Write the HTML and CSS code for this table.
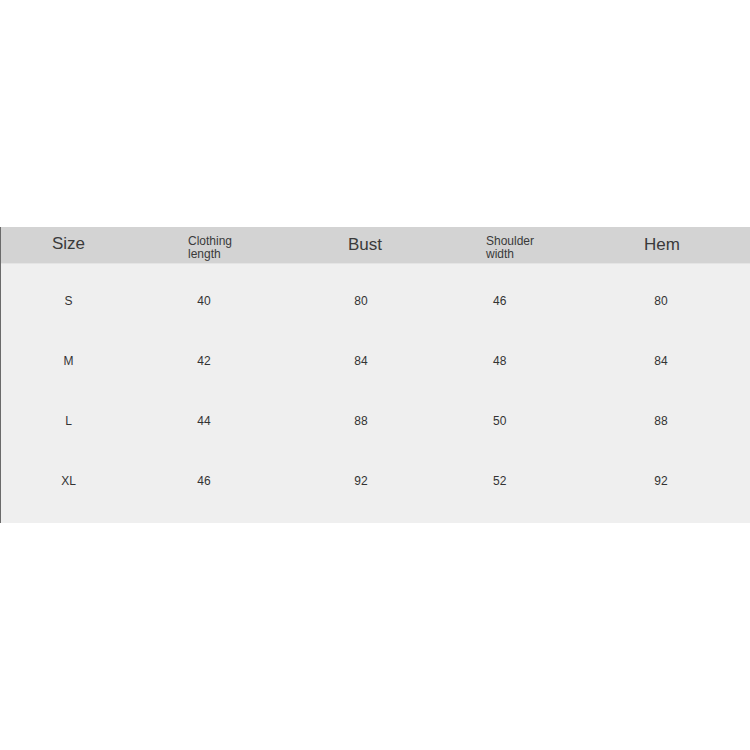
FILE: index.html
```html
<!DOCTYPE html>
<html>
<head>
<meta charset="utf-8">
<link rel="stylesheet" href="styles.css">
</head>
<body>
<div class="page">
  <div class="chart">
    <div class="head">
      <div class="c c1 big">Size</div>
      <div class="c c2 small">Clothing<br>length</div>
      <div class="c c3 big">Bust</div>
      <div class="c c4 small">Shoulder<br>width</div>
      <div class="c c5 big">Hem</div>
    </div>
    <div class="body">
      <div class="row">
        <div class="c c1">S</div><div class="c c2">40</div><div class="c c3">80</div><div class="c c4">46</div><div class="c c5">80</div>
      </div>
      <div class="row">
        <div class="c c1">M</div><div class="c c2">42</div><div class="c c3">84</div><div class="c c4">48</div><div class="c c5">84</div>
      </div>
      <div class="row">
        <div class="c c1">L</div><div class="c c2">44</div><div class="c c3">88</div><div class="c c4">50</div><div class="c c5">88</div>
      </div>
      <div class="row">
        <div class="c c1">XL</div><div class="c c2">46</div><div class="c c3">92</div><div class="c c4">52</div><div class="c c5">92</div>
      </div>
    </div>
  </div>
</div>
</body>
</html>
```
FILE: styles.css
```css
html, body {
  margin: 0;
  padding: 0;
  background: #ffffff;
}
.page {
  width: 750px;
  height: 750px;
  padding-top: 227px;
  box-sizing: border-box;
  font-family: "Liberation Sans", Arial, sans-serif;
}
.chart {
  border-left: 1px solid #6a6a6a;
  box-sizing: border-box;
  width: 750px;
}
.head, .row {
  display: grid;
  grid-template-columns: 135px 136px 180px 122px 1fr;
  align-items: center;
}
.head {
  background: #d3d3d3;
  height: 36px;
  border-bottom: 1px solid #e4e4e4;
  color: #3a3a3a;
}
.body {
  background: #efefef;
  padding: 7px 0 12px;
}
.row {
  height: 60px;
  font-size: 12px;
  color: #333333;
}
.c {
  text-align: center;
}
.big {
  font-size: 17px;
}
.small {
  font-size: 12px;
  line-height: 13px;
  text-align: left;
  padding-top: 6px;
}
.head .c1 { padding-bottom: 2px; }
.head .c2 { padding-left: 52px; }
.head .c3 { padding-left: 6px; }
.head .c4 { padding-left: 34px; }
.head .c5 { padding-right: 0; }
.row .c4 { text-align: left; padding-left: 41px; }
.row .c5 { padding-right: 2px; }
.row .c3 { padding-right: 2px; }
```
